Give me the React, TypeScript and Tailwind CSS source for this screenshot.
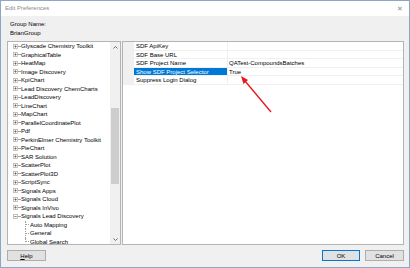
import React from "react";

const treeItems: { label: string; level: number; state?: "plus" | "minus" }[] = [
  { label: "Glyscade Chemistry Toolkit", level: 0, state: "plus" },
  { label: "GraphicalTable", level: 0, state: "plus" },
  { label: "HeatMap", level: 0, state: "plus" },
  { label: "Image Discovery", level: 0, state: "plus" },
  { label: "KpiChart", level: 0, state: "plus" },
  { label: "Lead Discovery ChemCharts", level: 0, state: "plus" },
  { label: "LeadDiscovery", level: 0, state: "plus" },
  { label: "LineChart", level: 0, state: "plus" },
  { label: "MapChart", level: 0, state: "plus" },
  { label: "ParallelCoordinatePlot", level: 0, state: "plus" },
  { label: "Pdf", level: 0, state: "plus" },
  { label: "PerkinElmer Chemistry Toolkit", level: 0, state: "plus" },
  { label: "PieChart", level: 0, state: "plus" },
  { label: "SAR Solution", level: 0, state: "plus" },
  { label: "ScatterPlot", level: 0, state: "plus" },
  { label: "ScatterPlot3D", level: 0, state: "plus" },
  { label: "ScriptSync", level: 0, state: "plus" },
  { label: "Signals Apps", level: 0, state: "plus" },
  { label: "Signals Cloud", level: 0, state: "plus" },
  { label: "Signals InVivo", level: 0, state: "plus" },
  { label: "Signals Lead Discovery", level: 0, state: "minus" },
  { label: "Auto Mapping", level: 1 },
  { label: "General", level: 1 },
  { label: "Global Search", level: 1 },
];

const props = [
  { name: "SDF ApiKey", value: "" },
  { name: "SDF Base URL", value: "" },
  { name: "SDF Project Name", value: "QATest-CompoundsBatches" },
  { name: "Show SDF Project Selector", value: "True", selected: true },
  { name: "Suppress Login Dialog", value: "" },
];

function Expander({ minus }: { minus?: boolean }) {
  return (
    <svg width="5" height="5" viewBox="0 0 5 5" className="shrink-0">
      <rect x="0.5" y="0.5" width="4" height="4" fill="#fff" stroke="#b4b4b4" strokeWidth="0.8" />
      <line x1="1.3" y1="2.5" x2="3.7" y2="2.5" stroke="#555" strokeWidth="0.7" />
      {!minus && <line x1="2.5" y1="1.3" x2="2.5" y2="3.7" stroke="#555" strokeWidth="0.7" />}
    </svg>
  );
}

function TreeRow({ item, last }: { item: (typeof treeItems)[number]; last: boolean }) {
  if (item.level === 1) {
    return (
      <div className="relative flex h-[8.5px] items-center pl-[17px]">
        <div
          className={`absolute left-[17px] top-0 border-l border-dotted border-[#a0a0a0] ${last ? "h-[4.5px]" : "h-[8.5px]"}`}
        />
        <div className="w-[4px] border-t border-dotted border-[#a0a0a0]" />
        <span className="ml-[1px]">{item.label}</span>
      </div>
    );
  }
  return (
    <div className="flex h-[8.5px] items-center pl-[5px]">
      <Expander minus={item.state === "minus"} />
      <div className="w-[2px] border-t border-dotted border-[#a0a0a0]" />
      <span className="ml-[1px]">{item.label}</span>
    </div>
  );
}

export default function App() {
  return (
    <div
      className="relative flex h-[268px] w-[410px] flex-col border border-[#8ea6c6] bg-[#f0f0f0] text-[6px] leading-[8.5px] text-black"
      style={{ fontFamily: '"Liberation Sans", Arial, sans-serif' }}
    >
      {/* title bar */}
      <div className="flex h-[15px] shrink-0 items-center justify-between bg-white pl-[4px] pr-[6px] text-[#8a8a8a]">
        <span>Edit Preferences</span>
        <span className="text-[7px] leading-none">✕</span>
      </div>

      <div className="flex flex-1 flex-col pl-[6px] pr-[5px]">
        <div className="pl-[3px] pt-[4px] leading-[9px]">
          <div>Group Name:</div>
          <div>BrianGroup</div>
        </div>

        <div className="mt-[3px] flex h-[204px] gap-[1px]">
          {/* tree */}
          <div className="flex w-[114px] overflow-hidden border border-[#b4b4b4] bg-white">
            <div className="flex-1 overflow-hidden">
              {treeItems.map((item, i) => (
                <TreeRow key={item.label} item={item} last={i === treeItems.length - 1} />
              ))}
            </div>
            <div className="flex w-[10px] flex-col bg-[#f0f0f0]">
              <div className="flex h-[10px] items-center justify-center">
                <svg width="5" height="3" viewBox="0 0 5 3">
                  <polyline points="0.5,2.5 2.5,0.5 4.5,2.5" fill="none" stroke="#606060" strokeWidth="0.9" />
                </svg>
              </div>
              <div className="mx-[1px] mt-[56px] h-[76px] bg-[#cdcdcd]" />
              <div className="flex-1" />
              <div className="flex h-[10px] items-center justify-center">
                <svg width="5" height="3" viewBox="0 0 5 3">
                  <polyline points="0.5,0.5 2.5,2.5 4.5,0.5" fill="none" stroke="#606060" strokeWidth="0.9" />
                </svg>
              </div>
            </div>
          </div>

          {/* property grid */}
          <div className="flex-1 border border-[#b4b4b4] bg-white">
            {props.map((p) => (
              <div key={p.name} className="flex h-[8.6px] leading-[8.6px]">
                <div className="w-[11px] bg-[#f0f0f0]" />
                <div
                  className={`w-[94px] border-b border-r border-[#f0f0f0] pl-[2px] ${p.selected ? "bg-[#0078d7] text-white" : ""}`}
                >
                  {p.name}
                </div>
                <div className="flex-1 border-b border-[#f0f0f0] pl-[1px]">{p.value}</div>
              </div>
            ))}
          </div>
        </div>

        <div className="mt-[5px] flex h-[11px] items-stretch">
          <button className="w-[39px] border border-[#adadad] bg-[#e1e1e1] text-[6px] leading-none">
            <span className="underline">H</span>elp
          </button>
          <div className="flex-1" />
          <button className="w-[38px] border border-[#0078d7] bg-[#e1e1e1] text-[6px] leading-none">OK</button>
          <button className="ml-[5px] w-[39px] border border-[#adadad] bg-[#e1e1e1] text-[6px] leading-none">
            Cancel
          </button>
        </div>
      </div>

      {/* annotation arrow */}
      <svg className="pointer-events-none absolute left-[-1px] top-[-1px]" width="410" height="268">
        <line x1="271" y1="112" x2="245" y2="81" stroke="#e8141c" strokeWidth="1.3" />
        <polygon points="241,76 248,80 243.5,84" fill="#e8141c" />
      </svg>
    </div>
  );
}
